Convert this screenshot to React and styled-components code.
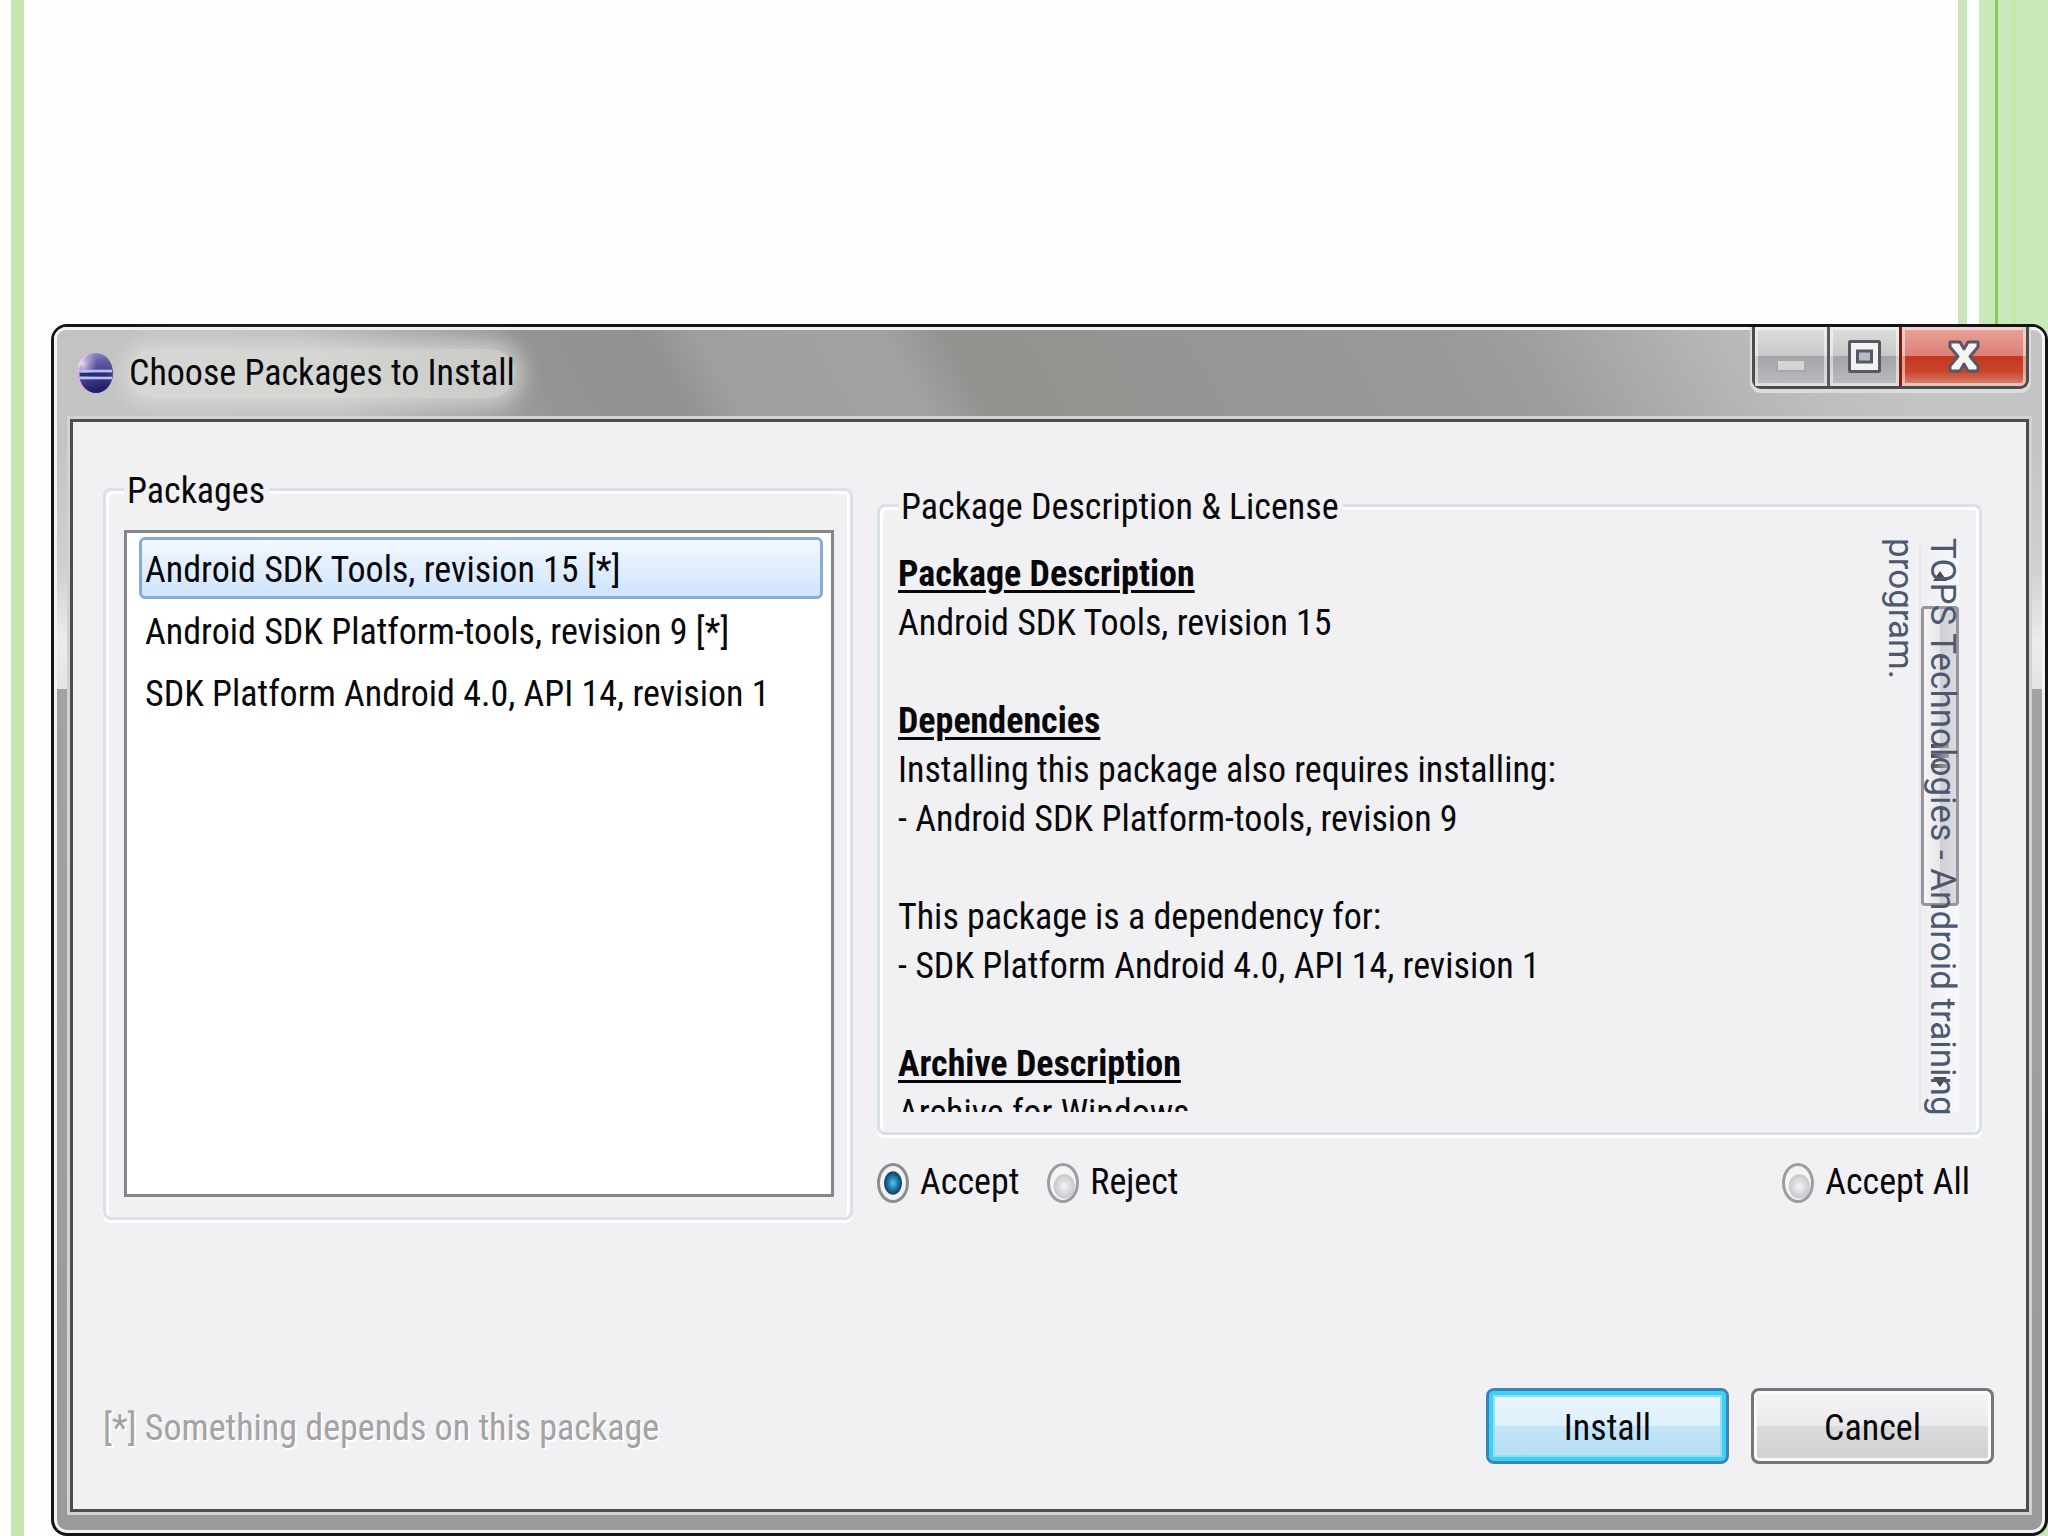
import React, { useState } from "react";
import styled, { createGlobalStyle } from "styled-components";

const packages = [
  "Android SDK Tools, revision 15 [*]",
  "Android SDK Platform-tools, revision 9 [*]",
  "SDK Platform Android 4.0, API 14, revision 1",
];

function EclipseIcon() {
  return (
    <svg width="38" height="40" viewBox="0 0 38 40" aria-hidden="true">
      <defs>
        <linearGradient id="ball" x1="0" y1="0" x2="0.3" y2="1">
          <stop offset="0" stopColor="#a99bd6" />
          <stop offset="0.4" stopColor="#5f57a3" />
          <stop offset="1" stopColor="#221d68" />
        </linearGradient>
        <radialGradient id="shine" cx="0.2" cy="0.25" r="0.45">
          <stop offset="0" stopColor="#f4e4f4" stopOpacity="0.9" />
          <stop offset="1" stopColor="#c9a5dc" stopOpacity="0" />
        </radialGradient>
      </defs>
      <ellipse cx="17" cy="20" rx="16" ry="18" fill="#dcaedb" />
      <ellipse cx="21" cy="20" rx="17" ry="20" fill="url(#ball)" />
      <ellipse cx="17" cy="20" rx="16" ry="19" fill="url(#shine)" />
      <path d="M4 18h33M4 25h33" stroke="#b9c3f0" strokeWidth="2.500" />
      <path d="M5 21.500h32" stroke="#2b2b7c" strokeWidth="3" />
    </svg>
  );
}

function MinimizeIcon() {
  return (
    <svg width="30" height="33" viewBox="0 0 30 33" aria-hidden="true">
      <rect x="1" y="20" width="28" height="11" fill="#d3d5d4" stroke="#a6a8aa" strokeWidth="2" />
    </svg>
  );
}

function MaximizeIcon() {
  return (
    <svg width="33" height="33" viewBox="0 0 33 33" aria-hidden="true">
      <rect x="1.5" y="1.5" width="30" height="30" rx="1" fill="#f3f3f4" stroke="#555867" strokeWidth="3" />
      <rect x="9.5" y="11" width="14" height="11" fill="#b9bbc0" stroke="#555867" strokeWidth="3" />
    </svg>
  );
}

function CloseIcon() {
  return (
    <svg width="32" height="33" viewBox="0 0 32 33" aria-hidden="true">
      <path
        d="M2 2H12L16 9L20 2H30V7L22 16.500L30 26V31H20L16 24L12 31H2V26L10 16.500L2 7Z"
        fill="#f5f5f5"
        stroke="#5b5663"
        strokeWidth="3"
        strokeLinejoin="round"
      />
    </svg>
  );
}

function Arrow({ down }) {
  return (
    <svg width="16" height="12" viewBox="0 0 16 12" aria-hidden="true">
      <path d={down ? "M1 1H15L8 11Z" : "M1 11H15L8 1Z"} fill="#4a4a4a" />
    </svg>
  );
}

function Radio({ label, checked, onChange }) {
  return (
    <RadioLabel>
      <RadioInput type="radio" name="license" checked={checked} onChange={onChange} />
      {label}
    </RadioLabel>
  );
}

export default function App() {
  const [selected, setSelected] = useState(0);
  const [answer, setAnswer] = useState("Accept");

  return (
    <Slide>
      <GlobalStyle />
      <Window>
        <TitleBar>
          <EclipseIcon />
          <Title>Choose Packages to Install</Title>
          <WindowControls>
            <ControlButton aria-label="Minimize">
              <MinimizeIcon />
            </ControlButton>
            <ControlButton aria-label="Maximize">
              <MaximizeIcon />
            </ControlButton>
            <ControlButton aria-label="Close" $close>
              <CloseIcon />
            </ControlButton>
          </WindowControls>
        </TitleBar>
        <Frame>
          <Panel>
            <Columns>
              <Group>
                <legend>Packages</legend>
                <PackageList role="listbox" aria-label="Packages">
                  {packages.map((name, i) => (
                    <PackageItem
                      key={name}
                      role="option"
                      aria-selected={i === selected}
                      $selected={i === selected}
                      onClick={() => setSelected(i)}
                    >
                      {name}
                    </PackageItem>
                  ))}
                </PackageList>
              </Group>
              <LicenseColumn>
                <Group>
                  <legend>Package Description &amp; License</legend>
                  <LicenseArea>
                    <LicenseText>
                      <h2>Package Description</h2>
                      <p>Android SDK Tools, revision 15</p>
                      <br />
                      <h2>Dependencies</h2>
                      <p>Installing this package also requires installing:</p>
                      <p>- Android SDK Platform-tools, revision 9</p>
                      <br />
                      <p>This package is a dependency for:</p>
                      <p>- SDK Platform Android 4.0, API 14, revision 1</p>
                      <br />
                      <h2>Archive Description</h2>
                      <p>Archive for Windows</p>
                    </LicenseText>
                    <ScrollBar>
                      <ScrollButton aria-label="Scroll up">
                        <Arrow />
                      </ScrollButton>
                      <Thumb>
                        <i />
                        <i />
                        <i />
                      </Thumb>
                      <ScrollButton aria-label="Scroll down">
                        <Arrow down />
                      </ScrollButton>
                    </ScrollBar>
                    <SideNote>TOPS Technologies - Android training program.</SideNote>
                  </LicenseArea>
                </Group>
                <Answers>
                  {["Accept", "Reject", "Accept All"].map((label) => (
                    <Radio
                      key={label}
                      label={label}
                      checked={answer === label}
                      onChange={() => setAnswer(label)}
                    />
                  ))}
                </Answers>
              </LicenseColumn>
            </Columns>
            <Footer>
              <Hint>[*] Something depends on this package</Hint>
              <DialogButton $primary>Install</DialogButton>
              <DialogButton>Cancel</DialogButton>
            </Footer>
          </Panel>
        </Frame>
      </Window>
    </Slide>
  );
}

const GlobalStyle = createGlobalStyle`
  * {
    box-sizing: border-box;
  }

  body {
    margin: 0;
    color: #08080c;
    font: 36px/49px "Roboto Condensed", "Open Sans", sans-serif;
  }

  button,
  input {
    font: inherit;
    color: inherit;
  }
`;

const Slide = styled.div`
  display: flex;
  min-height: 100vh;
  padding: 324px 0 0 51px;
  background:
    linear-gradient(
      to left,
      #c8eaba 30px,
      #c1e6a3 34px,
      #c9e9bc 37px,
      #c9e9bc 50px,
      #84cc57 50px,
      #84cc57 53px,
      #c8eaba 53px,
      #c8eaba 69px,
      #fdfffe 69px,
      #fdfffe 81px,
      #c8e6b9 81px,
      #c8e6b9 90px,
      transparent 90px
    ),
    linear-gradient(to right, #fefffd 11px, #c5e6b1 11px, #c5e6b1 24px, #fefffd 24px);
`;

const Window = styled.main`
  display: flex;
  flex: 1;
  flex-direction: column;
  border: 3px solid #131514;
  border-radius: 16px;
  background: linear-gradient(#c4c4c3 10%, #d0d0d0 20%, #ececec 26%, #e4e4e4 30%, #a3a2a3 30%, #9a999b);
  box-shadow: inset 0 0 0 3px #f2f3f2;
`;

const TitleBar = styled.header`
  display: flex;
  align-items: center;
  gap: 16px;
  height: 92px;
  padding: 0 16px 0 21px;
  border-radius: 13px 13px 0 0;
  background: linear-gradient(
    61deg,
    #c4c4c3 0%,
    #c0c1bf 14%,
    #939592 25%,
    #90928f 31%,
    #a0a19f 34%,
    #a1a2a0 43%,
    #91938f 46%,
    #999a97 70%,
    #9e9f9d 74%,
    #b8b9b7 84%,
    #c4c4c5 92%
  );
  box-shadow: inset 3px 0 #f2f3f2, inset -3px 0 #f2f3f2, inset 0 3px #f2f3f2;
`;

const Title = styled.h1`
  margin: 0;
  border-radius: 24px;
  background: rgba(222, 223, 220, 0.7);
  box-shadow: 0 0 20px 8px rgba(222, 223, 220, 0.7);
  font-size: 36px;
  font-weight: 400;
`;

const WindowControls = styled.div`
  display: flex;
  align-self: flex-start;
  height: 62px;
  margin-left: auto;
  border: 3px solid #4b4c50;
  border-top: 0;
  border-radius: 0 0 9px 9px;
  box-shadow: 0 2px 0 2px #dcdddc;
`;

const ControlButton = styled.button`
  display: flex;
  align-items: center;
  justify-content: center;
  width: ${(p) => (p.$close ? 127 : 72)}px;
  padding: 0;
  border: 0;
  border-left: ${(p) => (p.$close ? "3px solid #7c1d14" : "0")};
  border-radius: ${(p) => (p.$close ? "0 0 6px 0" : "0")};
  background: ${(p) =>
    p.$close
      ? "linear-gradient(#e9a49c, #dc7f74 50%, #c23a20 50%, #c8432a 75%, #d98a78)"
      : "linear-gradient(#dfe0de, #c6c8c6 50%, #a2a4a7 50%, #bcbdc1)"};
  box-shadow: inset 0 0 0 3px rgba(255, 255, 255, 0.5);

  & + &:not(:last-child) {
    border-left: 3px solid #5a5b60;
  }
`;

const Frame = styled.div`
  display: flex;
  flex: 1;
  padding: 0 16px 21px;
`;

const Panel = styled.section`
  display: flex;
  flex: 1;
  flex-direction: column;
  padding: 41px 32px 45px 30px;
  border: 3px solid #4e4d52;
  background: #f1f0f3;
  box-shadow: 0 0 0 3px #d2d2d3;
`;

const Columns = styled.div`
  display: grid;
  grid-template-columns: 750fr 1105fr;
  gap: 24px;
  padding-right: 12px;
`;

const Group = styled.fieldset`
  display: flex;
  min-width: 0;
  margin: 0;
  padding: 14px 16px 20px 18px;
  border: 3px solid #d8e1e3;
  border-radius: 8px;
  box-shadow: inset 3px 3px #fff, inset -3px 0 #fff, 0 3px #fff;

  legend {
    padding: 4px 4px 0 3px;
    background: #f1f0f3;
  }
`;

const PackageList = styled.ul`
  flex: 1;
  min-height: 667px;
  margin: 0;
  padding: 4px 8px 4px 12px;
  border: 3px solid #85868c;
  background: #fff;
  list-style: none;
`;

const PackageItem = styled.li`
  padding: 6px 3px 1px;
  border: 3px solid ${(p) => (p.$selected ? "#86abd9" : "transparent")};
  border-radius: 6px;
  background: ${(p) => (p.$selected ? "linear-gradient(#f3f8ff, #cfe4fd)" : "none")};
  cursor: default;
`;

const LicenseColumn = styled.div`
  display: flex;
  flex-direction: column;
  padding-top: 16px;
`;

const LicenseArea = styled.div`
  position: relative;
  display: flex;
  flex: 1;
  height: 566px;
`;

const LicenseText = styled.div`
  flex: 1;
  padding-top: 4px;
  overflow: hidden;

  h2,
  p {
    margin: 0;
    font-size: 36px;
  }

  h2 {
    text-decoration: underline;
    text-decoration-thickness: 3px;
    text-underline-offset: 4px;
  }
`;

const ScrollBar = styled.div`
  display: flex;
  flex-direction: column;
  width: 40px;
  margin-right: 4px;
  border-left: 2px solid #e6e6ea;
  background: linear-gradient(to right, #efeff1, #f7f8f9);
`;

const ScrollButton = styled.button`
  display: flex;
  flex: 1;
  align-items: flex-end;
  justify-content: center;
  padding: 24px 0;
  border: 0;
  background: none;

  &:first-child {
    flex: 0 0 58px;
  }
`;

const Thumb = styled.div`
  display: flex;
  flex: 0 0 300px;
  flex-direction: column;
  align-items: center;
  justify-content: center;
  gap: 6px;
  border: 3px solid #97979b;
  border-radius: 4px;
  background: linear-gradient(to right, #f5f5f6, #e6e6e9 50%, #cfcfd4 50%, #dcdce0);

  i {
    width: 18px;
    height: 4px;
    background: linear-gradient(to right, #4d4d50, #a5a5a8);
  }
`;

/* runs down the page, over the scroll bar */
const SideNote = styled.p`
  position: absolute;
  top: -8px;
  right: 0;
  height: 590px;
  margin: 0;
  color: #4c5870;
  font: 35px/42px Roboto, sans-serif;
  writing-mode: vertical-rl;
  pointer-events: none;
`;

const Answers = styled.div`
  display: flex;
  gap: 28px;
  padding: 23px 12px 0 0;

  label:last-child {
    margin-left: auto;
  }
`;

const RadioLabel = styled.label`
  display: flex;
  align-items: center;
  gap: 11px;
`;

const RadioInput = styled.input`
  width: 32px;
  height: 40px;
  margin: 0;
  appearance: none;
  border: 3px solid #9c9da0;
  border-radius: 50%;
  background: radial-gradient(closest-side at 55% 60%, #f4f4f5, #c9cacd 85%, #f4f4f5 95%);

  &:checked {
    border-color: #8b8d90;
    background: radial-gradient(closest-side, #5cc4ec, #1e7fb4 35%, #15405f 65%, #f0f1f2 72%);
  }
`;

const Footer = styled.footer`
  display: flex;
  align-items: center;
  gap: 22px;
  margin-top: auto;
`;

const Hint = styled.p`
  flex: 1;
  margin: 0;
  padding-top: 4px;
  color: #a3a2a5;
  text-shadow: 2px 2px #fff;
`;

const DialogButton = styled.button`
  width: 243px;
  height: 76px;
  padding: 4px 0 0;
  border: 3px solid ${(p) => (p.$primary ? "#3c84b4" : "#77767a")};
  border-radius: 8px;
  background: ${(p) =>
    p.$primary
      ? "linear-gradient(#ecf6fe, #def0fd 50%, #c2e5f9 50%, #b7dcf1)"
      : "linear-gradient(#f5f4f6, #ebeaec 50%, #dcdbdd 50%, #d0cfd1)"};
  box-shadow: ${(p) =>
    p.$primary ? "inset 0 0 0 4px #3ed0f7, inset 0 0 0 6px #8fdff8" : "inset 0 0 0 3px #fafafb"};
`;
